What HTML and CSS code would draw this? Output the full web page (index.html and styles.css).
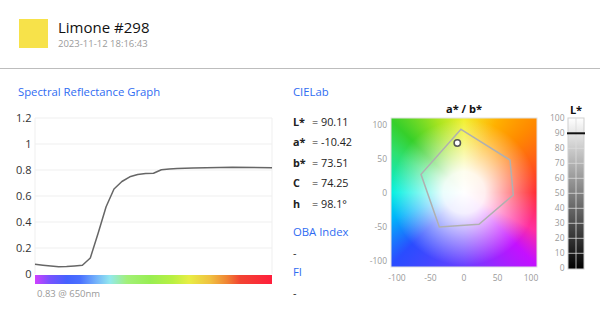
FILE: index.html
```html
<!DOCTYPE html>
<html lang="it">
<head>
    <meta charset="UTF-8">
    <meta name="viewport" content="width=device-width, initial-scale=1.0">
    <title>Limone #298</title>
    <link rel="stylesheet" href="styles.css">
</head>
<body>
    <header class="sample">
        <div class="swatch"></div>
        <div class="sample-info">
            <h1 class="sample-name">Limone #298</h1>
            <div class="sample-date">2023-11-12 18:16:43</div>
        </div>
    </header>

    <main class="measure">
        <section class="spectral">
            <h2 class="section-title">Spectral Reflectance Graph</h2>
            <svg class="spectral-chart" width="262" height="186" viewBox="0 0 262 186">
                <defs>
                    <linearGradient id="spectrum" x1="0" y1="0" x2="1" y2="0">
                        <stop offset="0" stop-color="#d040ff"/>
                        <stop offset="0.06" stop-color="#7a52ff"/>
                        <stop offset="0.135" stop-color="#4562ff"/>
                        <stop offset="0.19" stop-color="#4a70ff"/>
                        <stop offset="0.26" stop-color="#74b4fa"/>
                        <stop offset="0.316" stop-color="#92e8ee"/>
                        <stop offset="0.388" stop-color="#a2f078"/>
                        <stop offset="0.485" stop-color="#98ee52"/>
                        <stop offset="0.58" stop-color="#b8f042"/>
                        <stop offset="0.65" stop-color="#e8ee44"/>
                        <stop offset="0.74" stop-color="#f0c040"/>
                        <stop offset="0.81" stop-color="#f08434"/>
                        <stop offset="0.865" stop-color="#f24432"/>
                        <stop offset="1" stop-color="#ff1e3c"/>
                    </linearGradient>
                </defs>
                <g class="grid">
                    <line x1="17" y1="18" x2="254" y2="18"/>
                    <line x1="17" y1="44" x2="254" y2="44"/>
                    <line x1="17" y1="70" x2="254" y2="70"/>
                    <line x1="17" y1="96" x2="254" y2="96"/>
                    <line x1="17" y1="122" x2="254" y2="122"/>
                    <line x1="17" y1="148" x2="254" y2="148"/>
                    <line x1="17" y1="18" x2="17" y2="174"/>
                    <line x1="254" y1="18" x2="254" y2="174"/>
                </g>
                <g class="tick-labels" text-anchor="end">
                    <text x="13.5" y="22">1.2</text>
                    <text x="13.5" y="48">1</text>
                    <text x="13.5" y="74">0.8</text>
                    <text x="13.5" y="100">0.6</text>
                    <text x="13.5" y="126">0.4</text>
                    <text x="13.5" y="152">0.2</text>
                    <text x="13.5" y="178">0</text>
                </g>
                <rect x="17" y="175" width="237" height="9" fill="url(#spectrum)"/>
                <polyline class="curve" points="17,164.3 24.9,165.2 32.8,166 40.7,166.7 48.6,166.4 56.5,165.9 64.4,165.3 72.3,158 80.2,133 88.1,106.7 96,89 103.9,81.5 111.8,76.8 119.7,74.5 127.6,73.6 135.5,73.3 143.4,69.8 151.3,69 159.2,68.6 167.1,68.2 175,67.9 214.5,67.3 254,67.7"/>
            </svg>
            <div class="peak-note">0.83 @ 650nm</div>
        </section>

        <section class="lab">
            <h2 class="section-title">CIELab</h2>
            <dl class="lab-values">
                <dt>L*</dt><dd>= 90.11</dd>
                <dt>a*</dt><dd>= -10.42</dd>
                <dt>b*</dt><dd>= 73.51</dd>
                <dt>C</dt><dd>= 74.25</dd>
                <dt>h</dt><dd>= 98.1°</dd>
            </dl>
            <h2 class="section-title oba">OBA Index</h2>
            <p class="empty-value">-</p>
            <h2 class="section-title fi">FI</h2>
            <p class="empty-value">-</p>
        </section>

        <section class="plots">
            <svg class="plot-chart" width="240" height="210" viewBox="0 0 240 210">
                <defs>
                    <linearGradient id="lightness" x1="0" y1="0" x2="0" y2="1">
                        <stop offset="0" stop-color="#ffffff"/>
                        <stop offset="1" stop-color="#000000"/>
                    </linearGradient>
                </defs>

                <!-- a* / b* -->
                <text class="chart-title" x="104" y="29" text-anchor="middle">a* / b*</text>
                <foreignObject x="31" y="34" width="146" height="149">
                    <div class="ab-field" xmlns="http://www.w3.org/1999/xhtml"></div>
                </foreignObject>
                <rect class="frame" x="31" y="34" width="146" height="149"/>
                <polygon class="gamut" points="101,45.3 150,76 153.3,111 119,140.3 79.3,143 61,90.3"/>
                <circle class="sample-dot" cx="97.3" cy="59" r="3.2"/>
                <g class="tick-labels small" text-anchor="end">
                    <text x="27" y="44">100</text>
                    <text x="27" y="78">50</text>
                    <text x="27" y="112">0</text>
                    <text x="27" y="146">-50</text>
                    <text x="27" y="180">-100</text>
                </g>
                <g class="tick-labels small" text-anchor="middle">
                    <text x="37" y="197">-100</text>
                    <text x="70.5" y="197">-50</text>
                    <text x="104" y="197">0</text>
                    <text x="137.5" y="197">50</text>
                    <text x="171" y="197">100</text>
                </g>

                <!-- L* -->
                <text class="chart-title" x="216" y="30" text-anchor="middle">L*</text>
                <rect class="l-bar" x="208" y="34" width="16" height="151" fill="url(#lightness)"/>
                <g class="l-grid">
                    <line x1="208" y1="49.3" x2="224" y2="49.3"/>
                    <line x1="208" y1="64.3" x2="224" y2="64.3"/>
                    <line x1="208" y1="79.3" x2="224" y2="79.3"/>
                    <line x1="208" y1="94.3" x2="224" y2="94.3"/>
                    <line x1="208" y1="109.3" x2="224" y2="109.3"/>
                    <line x1="208" y1="124.3" x2="224" y2="124.3"/>
                    <line x1="208" y1="139.3" x2="224" y2="139.3"/>
                    <line x1="208" y1="154.3" x2="224" y2="154.3"/>
                    <line x1="208" y1="169.3" x2="224" y2="169.3"/>
                    <line x1="216" y1="34" x2="216" y2="185"/>
                </g>
                <line class="l-mark" x1="207" y1="49.3" x2="225" y2="49.3"/>
                <g class="tick-labels small" text-anchor="end">
                    <text x="204.5" y="37.3">100</text>
                    <text x="204.5" y="52.3">90</text>
                    <text x="204.5" y="67.3">80</text>
                    <text x="204.5" y="82.3">70</text>
                    <text x="204.5" y="97.3">60</text>
                    <text x="204.5" y="112.3">50</text>
                    <text x="204.5" y="127.3">40</text>
                    <text x="204.5" y="142.3">30</text>
                    <text x="204.5" y="157.3">20</text>
                    <text x="204.5" y="172.3">10</text>
                    <text x="204.5" y="187.3">0</text>
                </g>
            </svg>
        </section>
    </main>
</body>
</html>
```

FILE: styles.css
```css
body {
    margin: 0;
    font-family: "Open Sans", "Noto Sans", sans-serif;
    color: #222;
    background: #fff;
}
.sample {
    display: flex;
    align-items: flex-start;
    gap: 10px;
    height: 69px;
    box-sizing: border-box;
    padding: 19px;
    border-bottom: 1px solid #bdbdbd;
}
.swatch {
    width: 29px;
    height: 29px;
    background-color: #f7e24a;
}
.sample-name {
    margin: 0;
    font-size: 15px;
    font-weight: normal;
    line-height: 16px;
    color: #111;
}
.sample-date {
    margin-top: 2px;
    font-size: 9.5px;
    line-height: 14px;
    color: #9a9a9a;
}
.measure {
    display: flex;
    padding: 15px 0 0 18px;
}
.section-title {
    margin: 0;
    font-size: 11.3px;
    font-weight: normal;
    line-height: 16px;
    color: #2f6cf2;
}
.spectral {
    width: 262px;
}
.spectral-chart {
    display: block;
    overflow: visible;
}
.grid line {
    stroke: #efefef;
    stroke-width: 1;
}
.tick-labels {
    font-size: 11px;
    fill: #333;
}
.tick-labels.small {
    font-size: 8.5px;
    fill: #9a9a9a;
}
.curve {
    fill: none;
    stroke: #666;
    stroke-width: 1.5;
    stroke-linejoin: round;
}
.peak-note {
    margin-top: 1px;
    padding-left: 19px;
    font-size: 9.5px;
    line-height: 14px;
    color: #9a9a9a;
}
.lab {
    width: 67px;
    margin-left: 13px;
}
.lab-values {
    display: grid;
    grid-template-columns: 19px auto;
    margin: 12px 0 0;
    font-size: 10.8px;
    line-height: 20.4px;
}
.lab-values dt {
    font-weight: bold;
}
.lab-values dd {
    margin: 0;
    white-space: nowrap;
}
.section-title.oba {
    margin-top: 10px;
}
.section-title.fi {
    margin-top: 1px;
}
.empty-value {
    margin: 3px 0 0;
    font-size: 10.8px;
    line-height: 20px;
}
.plot-chart {
    display: block;
}
.chart-title {
    font-size: 11px;
    font-weight: bold;
    fill: #111;
}
.ab-field {
    width: 100%;
    height: 100%;
    background:
        radial-gradient(circle at 50% 50%, #fff 0%, rgba(255, 255, 255, 0.92) 20%, rgba(255, 255, 255, 0.45) 45%, rgba(255, 255, 255, 0) 70%),
        conic-gradient(from 0deg, #f2f030 0deg, #ffb000 25deg, #ff8a00 45deg, #ff2a30 90deg, #ff2fa0 118deg, #c410ff 135deg, #6a40ff 180deg, #2a4cff 225deg, #00b4fa 250deg, #00f0e0 270deg, #2ee070 300deg, #36cf2a 315deg, #a8e420 340deg, #f2f030 360deg);
}
.frame {
    fill: none;
    stroke: #e2e2e2;
    stroke-width: 1;
}
.gamut {
    fill: none;
    stroke: #b0b0b0;
    stroke-width: 1.5;
}
.sample-dot {
    fill: #fff;
    stroke: #555;
    stroke-width: 1.5;
}
.l-bar {
    stroke: #cfcfcf;
    stroke-width: 1;
}
.l-grid line {
    stroke: rgba(220, 220, 220, 0.8);
    stroke-width: 1;
}
.l-mark {
    stroke: #111;
    stroke-width: 2;
}
```
